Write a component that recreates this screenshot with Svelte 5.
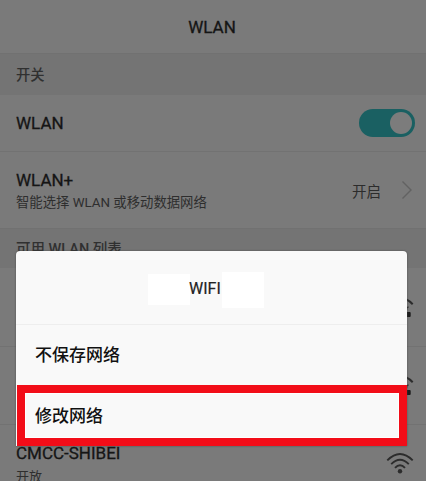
<script lang="ts">
  type Network = { ssid: string; status: string; locked: boolean };

  const networks: Network[] = [
    { ssid: '', status: '', locked: true },
    { ssid: '', status: '', locked: true },
    { ssid: 'CMCC-SHIBEI', status: '开放', locked: false },
  ];

  let enabled = $state(true);
</script>

<div class="screen">
  <header class="title">WLAN</header>
  <div class="section">开关</div>

  <div class="row switch-row">
    <span class="label">WLAN</span>
    <button class="toggle" class:on={enabled} aria-label="WLAN" onclick={() => (enabled = !enabled)}>
      <span class="knob"></span>
    </button>
  </div>

  <div class="row plus-row">
    <div class="texts">
      <span class="label">WLAN+</span>
      <span class="hint">智能选择 WLAN 或移动数据网络</span>
    </div>
    <span class="value">开启</span>
    <svg class="chevron" width="12" height="20" viewBox="0 0 12 20">
      <path d="M1.5 1.5 L10 10 L1.5 18.5" fill="none" stroke="#626262" stroke-width="1.4" />
    </svg>
  </div>

  <div class="section list-title">可用 WLAN 列表</div>

  {#each networks as network}
    <div class="row network">
      <div class="texts">
        <span class="label">{network.ssid}</span>
        <span class="hint">{network.status}</span>
      </div>
      <svg class="wifi" width="28" height="24" viewBox="0 0 28 24">
        {#if network.locked}
          <g fill="none" stroke="#2c2c2c" stroke-width="2">
            <path d="M1.3 8.2 Q14 -4.6 26.7 8.2" />
            <path d="M5.2 12 Q14 3 20 9.5" />
            <path d="M20.5 14 V13 Q20.5 11 22.5 11.3" stroke-width="1.5" />
          </g>
          <rect x="19.5" y="16" width="5.2" height="5" rx="1" fill="#1c1c1c" />
        {:else}
          <g fill="none" stroke="#2c2c2c" stroke-width="1.9">
            <path d="M1.3 7.4 Q14 -5.4 26.7 7.4" />
            <path d="M5.2 11.2 Q14 2.2 22.8 11.2" />
            <path d="M9 14.9 Q14 9.6 19 14.9" />
          </g>
          <circle cx="14" cy="18.3" r="2.2" fill="#2c2c2c" />
        {/if}
      </svg>
    </div>
  {/each}

  <div class="dialog" role="dialog" aria-label="WIFI">
    <div class="dialog-title">
      <span class="mask left"></span>
      <span class="name">WIFI</span>
      <span class="mask right"></span>
    </div>
    <button class="option">不保存网络</button>
    <button class="option selected">修改网络</button>
  </div>
</div>

<style>
  :global(body) {
    background: #7a7a7a;
    overflow: hidden;
  }

  .screen {
    position: relative;
    width: 426px;
    height: 481px;
    overflow: hidden;
    display: flex;
    flex-direction: column;
    background: #7a7a7a;
    color: #151515;
    font-family: Roboto, 'Noto Sans CJK SC', sans-serif;
  }

  .title,
  .section,
  .row {
    box-sizing: border-box;
    flex: none;
  }

  .title {
    height: 53px;
    padding-right: 2px;
    line-height: 55px;
    text-align: center;
    font-size: 17px;
    -webkit-text-stroke: 0.3px;
  }

  .section {
    height: 42px;
    padding: 0 16px;
    border-top: 1px solid #717171;
    background: #747474;
    line-height: 43px;
    font-size: 14.3px;
    font-weight: 500;
    color: #303030;
  }

  .list-title {
    height: 40px;
    line-height: 42px;
    font-size: 14.5px;
  }

  .row {
    display: flex;
    align-items: center;
    padding: 0 12px 0 16px;
    border-bottom: 1px solid #727272;
  }

  .switch-row {
    height: 57px;
    justify-content: space-between;
  }

  .plus-row {
    height: 76px;
    padding-right: 13px;
    border-bottom: none;
  }

  .label {
    font-size: 17px;
    line-height: 22px;
    -webkit-text-stroke: 0.3px;
  }

  .texts {
    flex: 1;
    display: flex;
    flex-direction: column;
    padding-top: 3px;
  }

  .hint {
    font-size: 13.35px;
    line-height: 24px;
    color: #2e2e2e;
  }

  .value {
    margin-right: 20px;
    font-size: 14.5px;
    color: #2c2c2c;
  }

  .toggle {
    display: flex;
    width: 56px;
    height: 28px;
    margin-right: -1px;
    padding: 3px;
    border: none;
    border-radius: 14px;
    background: #5f5f5f;
  }

  .toggle.on {
    justify-content: flex-end;
    background: #1a6062;
  }

  .knob {
    width: 22px;
    height: 22px;
    border-radius: 50%;
    background: #7c7c7c;
  }

  .network {
    height: 78.5px;
    padding-top: 2px;
  }

  .network .hint {
    line-height: 26px;
    font-size: 13px;
  }

  .dialog {
    position: absolute;
    left: 16px;
    top: 251px;
    width: 391px;
    height: 195px;
    box-sizing: border-box;
    display: flex;
    flex-direction: column;
    border-radius: 4px 4px 0 0;
    background: #f9f9f9;
    box-shadow: 0 0 2px #444;
  }

  .dialog-title {
    box-sizing: border-box;
    flex: none;
    display: flex;
    align-items: center;
    height: 74px;
    padding: 4px 0 0 132px;
    border-bottom: 1px solid #eee;
    font-size: 16px;
    color: #222;
  }

  .name {
    width: 33px;
    margin: -2px 0 0 -1px;
    -webkit-text-stroke: 0.2px;
  }

  .mask {
    background: #fff;
  }

  .left {
    width: 42px;
    height: 31px;
  }

  .right {
    width: 42px;
    height: 36px;
  }

  .option {
    flex: none;
    height: 60px;
    padding: 0 0 4px 19px;
    border: none;
    background: none;
    text-align: left;
    font-family: inherit;
    font-size: 17px;
    font-weight: 500;
    color: #111;
  }

  .selected {
    height: 61px;
    padding: 0 0 2px 10px;
    border: 8px solid #f20d18;
    margin-left: 1px;
    box-shadow: inset 0 0 0 1px #fff;
  }
</style>
